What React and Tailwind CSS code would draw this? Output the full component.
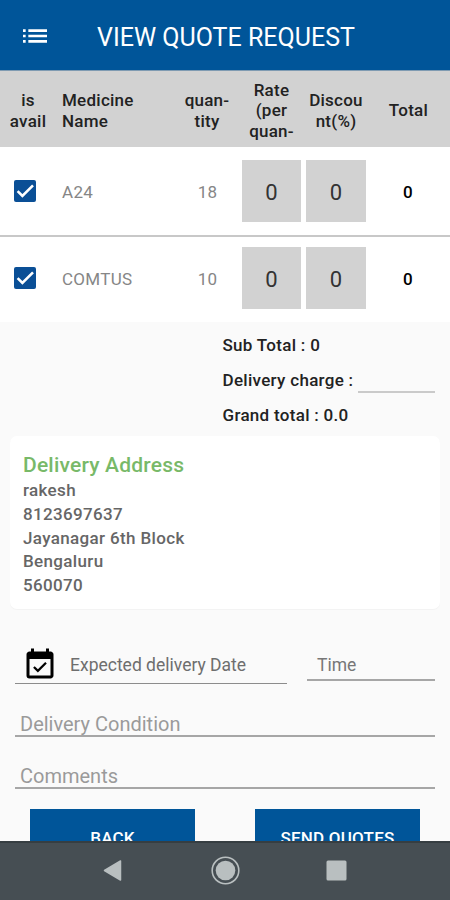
import { MdEventAvailable, MdList } from "react-icons/md";

const medicines = [
  { name: "A24", quantity: 18, rate: 0, discount: 0, total: 0 },
  { name: "COMTUS", quantity: 10, rate: 0, discount: 0, total: 0 },
];

const address = ["rakesh", "8123697637", "Jayanagar 6th Block", "Bengaluru", "560070"];

const Header = () => {
  return (
    <header className="flex items-center h-[71px] shrink-0 bg-[#005599] text-white pl-[19px] border-b border-[#7f9bb2]">
      <MdList className="size-8 mt-px" />
      <h1 className="ml-[46px] pt-[5px] text-[25px] leading-8">VIEW QUOTE REQUEST</h1>
    </header>
  );
};

const TableHead = () => {
  return (
    <div className="flex items-center h-[76px] shrink-0 bg-[#d2d2d2] text-center text-[17px] leading-[20.4px] tracking-[0.25px] font-medium text-[#222] pt-[3px]">
      <p className="w-[56px]">is<br />avail</p>
      <p className="w-[120px] pl-1.5 text-left">Medicine<br />Name</p>
      <p className="w-[62px]">quan-<br />tity</p>
      <p className="w-[67px]">Rate<br />(per<br />quan-</p>
      <p className="w-[62px]">Discou<br />nt(%)</p>
      <p className="w-[83px]">Total</p>
    </div>
  );
};

const Checkbox = () => {
  return (
    <span className="flex items-center justify-center size-[22px] rounded-[2px] bg-[#0a4f96]">
      <svg viewBox="0 0 22 22" className="size-[22px]" fill="none" stroke="#fff" strokeWidth="2.6">
        <path d="M3.6 11.2 8.4 16 19 5.4" />
      </svg>
    </span>
  );
};

const MedicineRow = ({ item }) => {
  return (
    <div className="flex items-center h-full text-[17px] tracking-[0.3px]">
      <div className="w-[62px] pl-3.5">
        <Checkbox />
      </div>
      <p className="w-[114px] pt-[3px] text-[#868686]">{item.name}</p>
      <p className="w-[66px] pt-[3px] pr-[3px] text-center text-[#868686]">{item.quantity}</p>
      <div className="flex gap-[5px] text-[22px] text-[#333]">
        <span className="flex items-center justify-center w-[59px] h-[62px] pt-0.5 bg-[#d2d2d2]">{item.rate}</span>
        <span className="flex items-center justify-center w-[60px] h-[62px] pt-0.5 bg-[#d2d2d2]">{item.discount}</span>
      </div>
      <p className="w-[84px] pt-[3px] text-center font-medium text-black">{item.total}</p>
    </div>
  );
};

const Totals = () => {
  return (
    <div className="h-[114px] shrink-0 pl-[222.5px] pt-[5px] text-[17px] tracking-[0.3px] font-medium text-[#222]">
      <p className="h-[35px] leading-[36px]">Sub Total : 0</p>
      <div className="flex h-[36px]">
        <p className="w-[135.5px] leading-[37px] whitespace-nowrap">Delivery charge :</p>
        <span className="w-[77px] h-[31px] border-b-2 border-[#cacaca]" />
      </div>
      <p className="h-[35px] leading-[35px]">Grand total : 0.0</p>
    </div>
  );
};

const AddressCard = () => {
  return (
    <div className="mx-2.5 h-[173px] shrink-0 rounded-[7px] bg-white pl-[13px] pt-4 shadow-[0_1px_1px_rgba(0,0,0,0.03)]">
      <h2 className="h-[27px] text-[21px] leading-[27px] tracking-[0.2px] font-medium text-[#78b968]">Delivery Address</h2>
      {address.map((line) => (
        <p key={line} className="text-[17px] leading-[23.8px] tracking-[0.35px] font-medium text-[#666]">{line}</p>
      ))}
    </div>
  );
};

const Fields = () => {
  return (
    <div className="px-[15px] pt-9 shrink-0 h-[200px]">
      <div className="flex justify-between">
        <div className="flex items-center w-[272px] h-[39px] border-b border-[#8c8c8c] pl-[7px]">
          <MdEventAvailable className="size-9 mt-[2px] text-black" />
          <p className="pl-3 pt-[3px] text-[17.5px] text-[#6e6e6e]">Expected delivery Date</p>
        </div>
        <p className="w-[128px] h-[36px] border-b-2 border-[#a6a6a6] pl-[10px] text-[17.5px] leading-[40px] text-[#777]">Time</p>
      </div>
      <p className="h-[53px] border-b-2 border-[#a6a6a6] pl-[5px] pt-[25px] text-[20px] leading-[30px] text-[#9a9a9a]">Delivery Condition</p>
      <p className="h-[52px] border-b-2 border-[#a6a6a6] pl-[5px] pt-[24px] text-[20px] leading-[30px] text-[#9a9a9a]">Comments</p>
    </div>
  );
};

const Actions = () => {
  return (
    <div className="flex justify-between h-[32px] shrink-0 overflow-hidden px-[30px] text-[17px] tracking-[0.2px] font-medium text-white">
      <button className="w-[165px] h-[60px] bg-[#005599]">BACK</button>
      <button className="w-[165px] h-[60px] bg-[#005599]">SEND QUOTES</button>
    </div>
  );
};

const NavigationBar = () => {
  return (
    <nav className="h-[59px] shrink-0 bg-[#464e53] border-t-2 border-[#363e42]">
      <svg viewBox="0 0 450 57" className="w-full h-[57px]" fill="#b9bfc0">
        <path d="M104.5 27.5 120.5 18v19z" stroke="#b9bfc0" strokeWidth="1.5" strokeLinejoin="round" />
        <circle cx="225.5" cy="27.5" r="9.8" />
        <circle cx="225.5" cy="27.5" r="13.3" fill="none" stroke="#b9bfc0" strokeWidth="1.6" />
        <rect x="326.5" y="17.5" width="20" height="20" rx="1.5" />
      </svg>
    </nav>
  );
};

export default function App() {
  return (
    <div className="flex flex-col w-[450px] h-[900px] overflow-hidden bg-[#fafafa] font-['Roboto',sans-serif]">
      <Header />
      <TableHead />
      <div className="h-[90px] shrink-0 bg-white border-b-2 border-[#c8c8c8]">
        <MedicineRow item={medicines[0]} />
      </div>
      <div className="h-[85px] shrink-0 bg-white pb-[3px]">
        <MedicineRow item={medicines[1]} />
      </div>
      <Totals />
      <AddressCard />
      <Fields />
      <Actions />
      <NavigationBar />
    </div>
  );
}
